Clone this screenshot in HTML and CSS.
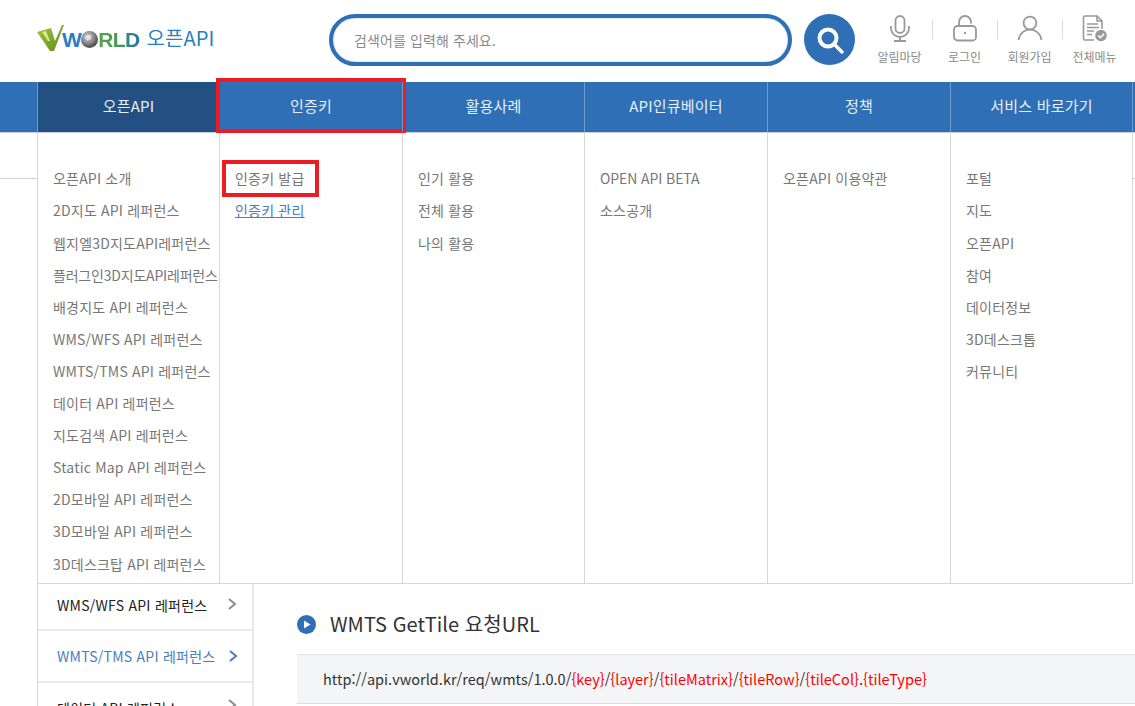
FILE: index.html
```html
<!DOCTYPE html>
<html lang="ko">
<head>
<meta charset="utf-8">
<title>VWORLD 오픈API</title>
<link rel="stylesheet" href="styles.css">
</head>
<body>
<div class="page">
  <span class="back-line back-left"></span>
  <span class="back-line back-right"></span>
  <header class="top">
    <a class="logo" href="#">
      <svg class="logo-v" width="28" height="27" viewBox="0 0 28 27">
        <defs><linearGradient id="vg" x1="0" y1="0" x2="1" y2="1"><stop offset="0" stop-color="#a6c43a"/><stop offset="1" stop-color="#5f8f1e"/></linearGradient></defs>
        <path d="M0 7 L14 3 L18 16 L25 0 L27 0 L17 26 L13 26 Z" fill="url(#vg)"/>
        <path d="M5 7 L9 6 L13 16 L11 16 Z" fill="#dbe68f"/>
      </svg>
      <span class="logo-word">W</span>
      <svg class="logo-globe" width="17" height="17" viewBox="0 0 18 18">
        <defs><radialGradient id="gg" cx="0.4" cy="0.35" r="0.7"><stop offset="0" stop-color="#d8d8d8"/><stop offset="0.6" stop-color="#7d7d7d"/><stop offset="1" stop-color="#3c3c3c"/></radialGradient></defs>
        <circle cx="9" cy="9" r="9" fill="url(#gg)"/>
        <path d="M4 6 Q8 3 11 5 L10 9 L6 10 Z" fill="#f0f0f0" opacity=".7"/>
      </svg>
      <span class="logo-word logo-rld">RLD</span>
      <span class="logo-title">오픈API</span>
    </a>
    <form class="search">
      <span class="search-box">검색어를 입력해 주세요.</span>
      <span class="search-btn">
        <svg width="30" height="30" viewBox="0 0 30 30" fill="none" stroke="#fff"><circle cx="13" cy="13" r="8.5" stroke-width="4"/><path d="M19.5 19.5 L27 27" stroke-width="3.4" stroke-linecap="round"/></svg>
      </span>
    </form>
    <ul class="utils">
      <li class="util">
        <svg width="20" height="27" viewBox="0 0 20 27" fill="none" stroke="#999" stroke-width="1.8"><rect x="5.5" y="1" width="9" height="17" rx="4.5"/><path d="M1 11 V13 a9 9 0 0 0 18 0 V11 M10 22 V25.5 M4 26 H16"/></svg>
        <span>알림마당</span>
      </li>
      <li class="util">
        <svg width="24" height="27" viewBox="0 0 24 27" fill="none" stroke="#999" stroke-width="1.8"><path d="M6 11 V7 a6 6 0 0 1 12 0 V8.5"/><rect x="1" y="11" width="22" height="14.5" rx="3.5"/><circle cx="12" cy="18" r="1.2" fill="#999" stroke="none"/></svg>
        <span>로그인</span>
      </li>
      <li class="util">
        <svg width="26" height="27" viewBox="0 0 26 27" fill="none" stroke="#999" stroke-width="1.8"><circle cx="13" cy="8" r="6.4"/><path d="M1.5 25 C2.5 18 8 14.5 13 14.5 C18 14.5 23.5 18 24.5 25"/></svg>
        <span>회원가입</span>
      </li>
      <li class="util">
        <svg width="26" height="27" viewBox="0 0 26 27" fill="none" stroke="#999" stroke-width="1.6"><path d="M12 25 H3 a1.5 1.5 0 0 1 -1.5 -1.5 V2.5 A1.5 1.5 0 0 1 3 1 H15 L20 6 V14"/><path d="M15 1 V6 H20 M5 9 H16 M5 12.5 H17 M5 16 H12 M5 19.5 H10"/><circle cx="19" cy="20.5" r="5.8" fill="#999" stroke="none"/><path d="M16.2 20.5 L18.4 22.7 L22 18.9" stroke="#fff"/></svg>
        <span>전체메뉴</span>
      </li>
    </ul>
  </header>

  <nav class="gnb">
    <div class="gnb-inner">
      <a class="gnb-item is-active" href="#">오픈API</a>
      <a class="gnb-item has-mark" href="#">인증키</a>
      <a class="gnb-item" href="#">활용사례</a>
      <a class="gnb-item" href="#">API인큐베이터</a>
      <a class="gnb-item" href="#">정책</a>
      <a class="gnb-item" href="#">서비스 바로가기</a>
    </div>
  </nav>

  <div class="drop">
    <ul class="drop-col">
      <li>오픈API 소개</li>
      <li>2D지도 API 레퍼런스</li>
      <li>웹지엘3D지도API레퍼런스</li>
      <li class="tight">플러그인3D지도API레퍼런스</li>
      <li>배경지도 API 레퍼런스</li>
      <li>WMS/WFS API 레퍼런스</li>
      <li>WMTS/TMS API 레퍼런스</li>
      <li>데이터 API 레퍼런스</li>
      <li>지도검색 API 레퍼런스</li>
      <li>Static Map API 레퍼런스</li>
      <li>2D모바일 API 레퍼런스</li>
      <li>3D모바일 API 레퍼런스</li>
      <li>3D데스크탑 API 레퍼런스</li>
    </ul>
    <ul class="drop-col">
      <li><span class="has-box">인증키 발급</span></li>
      <li class="link">인증키 관리</li>
    </ul>
    <ul class="drop-col">
      <li>인기 활용</li>
      <li>전체 활용</li>
      <li>나의 활용</li>
    </ul>
    <ul class="drop-col">
      <li class="latin">OPEN API BETA</li>
      <li>소스공개</li>
    </ul>
    <ul class="drop-col">
      <li>오픈API 이용약관</li>
    </ul>
    <ul class="drop-col last">
      <li>포털</li>
      <li>지도</li>
      <li>오픈API</li>
      <li>참여</li>
      <li>데이터정보</li>
      <li>3D데스크톱</li>
      <li>커뮤니티</li>
    </ul>
  </div>

  <div class="lower">
    <aside class="side">
      <a class="side-item first" href="#">WMS/WFS API 레퍼런스<svg class="chev" width="10" height="14" viewBox="0 0 10 14" fill="none" stroke="#8d8d8d" stroke-width="2"><path d="M2 2 L8 7 L2 12"/></svg></a>
      <a class="side-item current" href="#">WMTS/TMS API 레퍼런스<svg class="chev" width="10" height="14" viewBox="0 0 10 14" fill="none" stroke="#4a7dbd" stroke-width="2"><path d="M2 2 L8 7 L2 12"/></svg></a>
      <a class="side-item" href="#">데이터 API 레퍼런스<svg class="chev" width="10" height="14" viewBox="0 0 10 14" fill="none" stroke="#8d8d8d" stroke-width="2"><path d="M2 2 L8 7 L2 12"/></svg></a>
    </aside>
    <main class="content">
      <h2 class="title">
        <svg width="19" height="19" viewBox="0 0 19 19"><circle cx="9.5" cy="9.5" r="9.5" fill="#2f6fb5"/><path d="M7 5.5 L13.5 9.5 L7 13.5 Z" fill="#fff"/></svg>
        WMTS GetTile 요청URL
      </h2>
      <div class="url">http://api.vworld.kr/req/wmts/1.0.0/<em>{key}</em>/<em>{layer}</em>/<em>{tileMatrix}</em>/<em>{tileRow}</em>/<em>{tileCol}</em>.<em>{tileType}</em></div>
    </main>
  </div>
</div>
</body>
</html>
```
FILE: styles.css
```css
* { box-sizing: border-box; }
html, body { margin: 0; padding: 0; height: 706px; overflow: hidden; background: #fff; }
body { font-family: "Noto Sans CJK KR", "Noto Sans", sans-serif; font-size: 14px; color: #777; }
ul { list-style: none; margin: 0; padding: 0; }
a { text-decoration: none; color: inherit; }

.page { position: relative; width: 1135px; height: 706px; overflow: hidden; }
.back-line { position: absolute; top: 178px; height: 1px; background: #d2d2d2; }
.back-left { left: 0; width: 37px; }
.back-right { left: 1133px; width: 2px; }

/* header */
.top { display: flex; align-items: flex-start; height: 82px; }
.logo { display: flex; align-items: center; width: 292px; height: 28px; margin: 24px 0 0 37px; flex: none; }
.logo-v { margin-right: -3px; flex: none; }
.logo-word { font-family: "Liberation Sans", sans-serif; font-weight: 700; font-size: 21px; line-height: 24px; color: #2a7fc0; letter-spacing: -0.6px; margin-top: 3px; }
.logo-globe { flex: none; margin: 3px 0 0 0; }
.logo-rld { background: linear-gradient(90deg, #5aa24a 0%, #3f9a4f 50%, #2470ba 100%); -webkit-background-clip: text; background-clip: text; color: transparent; }
.logo-title { font-size: 20px; line-height: 24px; color: #2a7fc0; margin: 0 0 0 7px; letter-spacing: 0.1px; }

.search { display: flex; align-items: flex-start; width: 527px; margin-top: 14px; flex: none; }
.search-box { display: flex; align-items: center; width: 463px; height: 52px; padding: 0 0 0 21px; border: 4px solid #2f6fb5; border-radius: 26px; font-size: 14px; letter-spacing: 0.1px; color: #8a8a8a; box-shadow: inset 0 0 2px #9db9d8; }
.search-btn { display: flex; align-items: center; justify-content: center; width: 51px; height: 51px; margin-left: 12px; border-radius: 50%; background: #2f6fb5; flex: none; }

.utils { display: flex; margin: 15px 0 0 11px; width: 260px; }
.util { position: relative; display: flex; flex-direction: column; align-items: center; width: 65px; }
.util svg { display: block; height: 27px; }
.util span { margin-top: 7px; font-size: 12px; line-height: 16px; color: #8a8a8a; white-space: nowrap; }
.util + .util::before { content: ""; position: absolute; left: 0; top: 5px; width: 1px; height: 19px; background: #dcdcdc; }

/* nav */
.gnb { height: 51px; background: #2f6fb5; border-bottom: 1px solid #c9ced6; }
.gnb-inner { display: grid; grid-template-columns: 182px 183px 182px 183px 183px 183px; margin-left: 37px; width: 1096px; height: 50px; }
.gnb-item { position: relative; display: flex; align-items: center; justify-content: center; height: 50px; padding-bottom: 3px; border-left: 1px solid #6f9bce; font-size: 15px; letter-spacing: 0.2px; color: #e8eff7; }
.gnb-item:last-child { border-right: 1px solid #6f9bce; }
.is-active { background: #235083; }
.has-mark::after { content: ""; position: absolute; left: -4px; right: -4px; top: -4px; bottom: -1px; border: 4px solid #ed1c24; }

/* dropdown */
.drop { display: grid; grid-template-columns: 182px 183px 182px 183px 183px 183px; margin-left: 37px; width: 1096px; height: 451px; background: #fff; border-bottom: 1px solid #d6d6d6; }
.drop-col { position: relative; padding: 29.4px 0 0 15px; border-left: 1px solid #d6d6d6; height: 450px; overflow: hidden; }
.drop-col.last { border-right: 1px solid #d6d6d6; }
.drop-col li { height: 32.1px; line-height: 32.1px; font-size: 14px; letter-spacing: 0.2px; color: #777; white-space: nowrap; }
.drop-col li.tight { letter-spacing: -0.2px; }
.drop-col li.latin { letter-spacing: -0.1px; }
.drop-col li.link { color: #4a7dbd; text-decoration: underline; }
.has-box { position: relative; display: inline-block; }
.has-box::after { content: ""; position: absolute; left: -13px; right: -14px; top: -2px; bottom: -3px; border: 4px solid #ed1c24; }

/* lower */
.lower { display: flex; margin-left: 37px; }
.side { width: 217px; height: 125px; border-left: 1px solid #d6d6d6; border-right: 2px solid #eaeaea; flex: none; }
.side-item { display: flex; align-items: center; justify-content: space-between; padding: 0 15px 0 19px; height: 52px; border-bottom: 2px solid #eaeaea; font-size: 14px; letter-spacing: 0.25px; color: #222; white-space: nowrap; }
.side-item.first { height: 47px; padding-bottom: 4px; }
.side-item.first .chev { margin-top: -1px; }
.side-item.current { color: #4a7dbd; padding-right: 14px; }
.side-item.current .chev { margin-top: 0; }
.chev { flex: none; margin-top: -6px; }

.content { flex: 1; padding-left: 43px; min-width: 0; }
.title { display: flex; align-items: center; gap: 14px; margin: 24px 0 0; height: 32px; font-size: 20px; font-weight: 400; line-height: 32px; color: #333; letter-spacing: 0.05px; white-space: nowrap; }
.url { display: flex; align-items: center; height: 50px; margin-top: 14px; padding: 0 0 1px 26px; background: #f4f5f7; border-top: 1px solid #e4e4e4; border-bottom: 1px solid #dcdcdc; font-size: 14.5px; letter-spacing: 0.01px; color: #333; white-space: pre; }
.url em { font-style: normal; color: #f00; }
```
